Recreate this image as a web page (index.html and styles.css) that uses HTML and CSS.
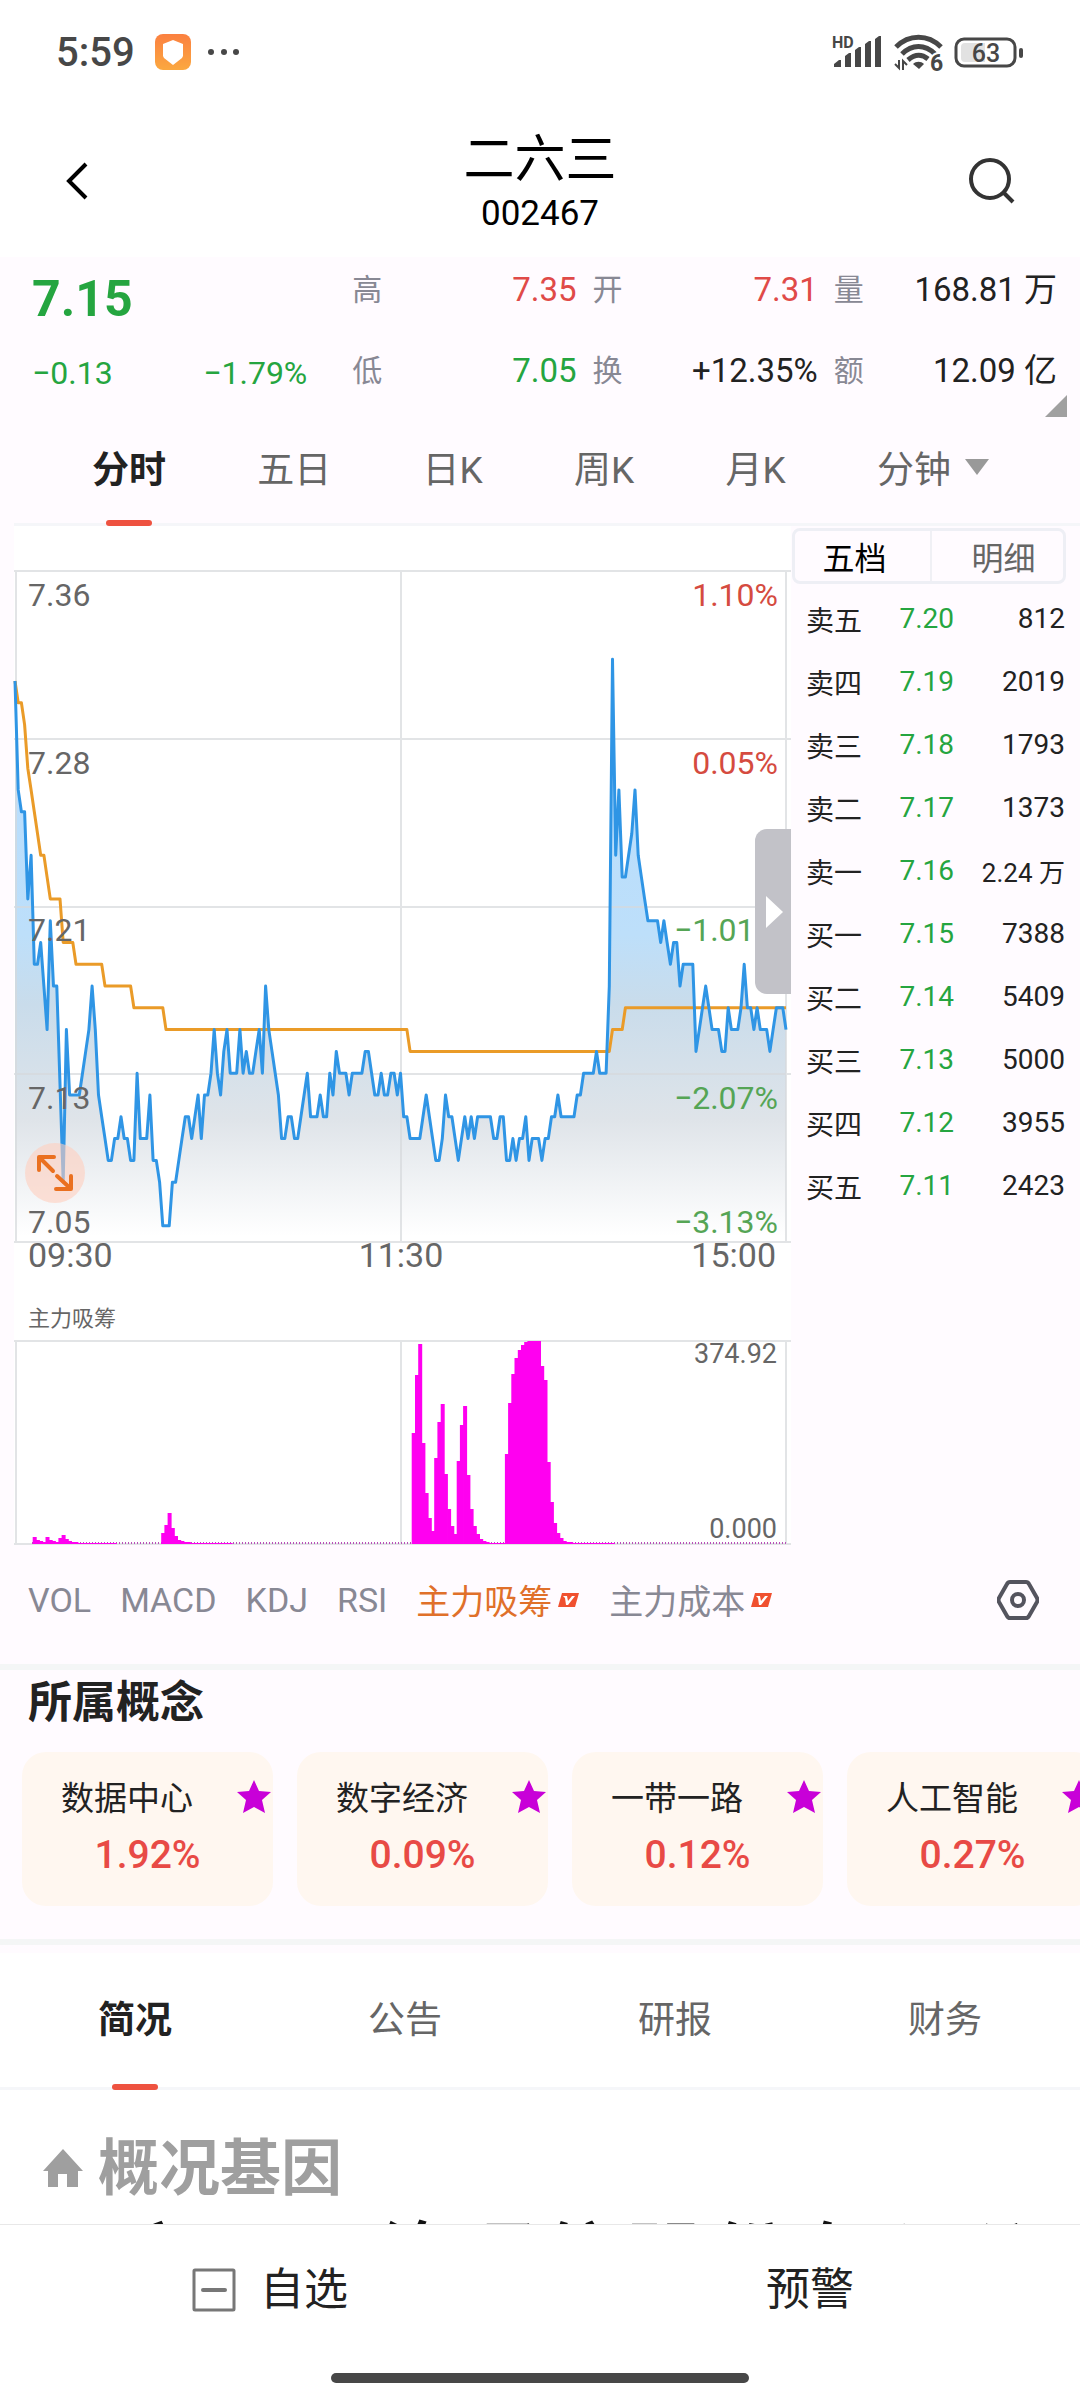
FILE: index.html
```html
<!DOCTYPE html>
<html lang="zh-CN">
<head>
  <meta charset="UTF-8">
  <meta name="viewport" content="width=device-width, initial-scale=1.0">
  <title>二六三 002467</title>
  <link rel="stylesheet" href="styles.css">
</head>
<body>

  <div class="status-bar">
    <span class="clock">5:59</span>
    <svg class="app-icon" width="36" height="36" viewBox="0 0 36 36">
      <defs>
        <linearGradient id="appFill" x1="0" y1="0" x2="0" y2="1">
          <stop offset="0" stop-color="#fb8040"/>
          <stop offset="1" stop-color="#fba840"/>
        </linearGradient>
      </defs>
      <rect width="36" height="36" rx="8" fill="url(#appFill)"/>
      <path d="M18 6L28 10V22L27 24 18 31 9 24 8 22V10z" fill="#fff"/>
    </svg>
    <svg width="34" height="8" viewBox="0 0 34 8" fill="#474747">
      <circle cx="4" cy="4" r="3"/><circle cx="17" cy="4" r="3"/><circle cx="29" cy="4" r="3"/>
    </svg>
    <div class="status-right">
      <svg width="52" height="40" viewBox="0 0 52 40" fill="#474747">
        <text x="0" y="16" class="hd-text">HD</text>
        <path d="M2 35v-3l5-4h2v7zM13 35V24l4-3h2v14zM23 35v-17l4-3h2v20zM33 35V12l4-3h2v26zM43 35V7l4-3h2v31z"/>
      </svg>
      <svg width="50" height="40" viewBox="0 0 50 40">
        <g fill="none" stroke="#474747" stroke-width="5">
          <path d="M2 15C15 2 34 2 47 15"/>
          <path d="M8 22C18 12 31 12 41 22"/>
          <path d="M14 28C21 22 28 22 34 27"/>
        </g>
        <path d="M19 32c3-3 8-3 11 0l-5 5z" fill="#474747"/>
        <path d="M5 28v8l-4-4M9 38v-9l4 4" fill="none" stroke="#474747" stroke-width="2"/>
        <text x="36" y="39" class="wifi-text">6</text>
      </svg>
      <svg width="70" height="40" viewBox="0 0 70 40">
        <rect x="2" y="7" width="59" height="27" rx="8" fill="none" stroke="#474747" stroke-width="3"/>
        <path d="M11 11h20v19H11a4 4 0 0 1-4-4V15a4 4 0 0 1 4-4z" fill="#e2e2e2"/>
        <rect x="65" y="16" width="4" height="10" rx="2" fill="#474747"/>
        <text x="32" y="30" text-anchor="middle" class="battery-text">63</text>
      </svg>
    </div>
  </div>

  <header class="header">
    <button class="icon-btn" aria-label="返回">
      <svg width="24" height="40" viewBox="0 0 24 40"><path d="M22 3L5 20l17 17" fill="none" stroke="#000" stroke-width="4"/></svg>
    </button>
    <div class="header-title">
      <h1>二六三</h1>
      <p>002467</p>
    </div>
    <button class="icon-btn" aria-label="搜索">
      <svg width="48" height="48" viewBox="0 0 48 48" fill="none" stroke="#333" stroke-width="4"><circle cx="22" cy="22" r="19"/><path d="M35 35l10 10"/></svg>
    </button>
  </header>

  <main class="content">
    <section class="quote">
      <div class="quote-main">
        <strong class="green">7.15</strong>
        <div class="quote-change green"><span>−0.13</span><span>−1.79%</span></div>
      </div>
      <dl class="quote-col">
        <dt>高</dt><dd class="red">7.35</dd>
        <dt>低</dt><dd class="green">7.05</dd>
      </dl>
      <dl class="quote-col">
        <dt>开</dt><dd class="red">7.31</dd>
        <dt>换</dt><dd>+12.35%</dd>
      </dl>
      <dl class="quote-col">
        <dt>量</dt><dd>168.81 万</dd>
        <dt>额</dt><dd>12.09 亿</dd>
      </dl>
    </section>
    <div class="corner"></div>

    <nav class="period-tabs">
      <button class="active">分时</button>
      <button>五日</button>
      <button>日K</button>
      <button>周K</button>
      <button>月K</button>
      <button>分钟<i class="arrow-down"></i></button>
    </nav>

    <div class="trade">
      <div class="charts">
        <svg class="price-chart" viewBox="0 0 777 748">
          <defs>
            <linearGradient id="areaFill" gradientUnits="userSpaceOnUse" x1="0" y1="130" x2="0" y2="710">
              <stop offset="0" stop-color="#b4dcff"/>
              <stop offset="0.480" stop-color="#bddffa"/>
              <stop offset="0.600" stop-color="#c9dceb"/>
              <stop offset="0.800" stop-color="#dfe4e9"/>
              <stop offset="1" stop-color="#ffffff"/>
            </linearGradient>
          </defs>
          <path id="priceArea" fill="url(#areaFill)"/>
          <g class="grid-lines">
            <path d="M0 45H777M0 213H777M0 381H777M0 548H777M0 716H777M2 45V716M387 45V716M772 45V716"/>
          </g>
          <polyline id="avgLine" class="avg-line"/>
          <polyline id="priceLine" class="price-line"/>
          <g class="axis-text">
            <text x="14" y="80">7.36</text>
            <text x="14" y="248">7.28</text>
            <text x="14" y="415">7.21</text>
            <text x="14" y="583">7.13</text>
            <text x="14" y="707">7.05</text>
          </g>
          <g class="axis-text time-text">
            <text x="14" y="741">09:30</text>
            <text x="387" y="741" text-anchor="middle">11:30</text>
            <text x="762" y="741" text-anchor="end">15:00</text>
          </g>
          <g class="axis-text" text-anchor="end">
            <text x="764" y="80" class="up">1.10%</text>
            <text x="764" y="248" class="up">0.05%</text>
            <text x="764" y="415" class="down">−1.01%</text>
            <text x="764" y="583" class="down">−2.07%</text>
            <text x="764" y="707" class="down">−3.13%</text>
          </g>
        </svg>
        <svg class="volume-chart" viewBox="0 0 777 271">
          <text x="14" y="52" class="volume-title">主力吸筹</text>
          <path class="grid-lines" d="M0 67H777M2 67V270M387 67V270M772 67V270M0 270H777"/>
          <path d="M18 269H772" class="zero-line"/>
          <g id="volumeBars" class="volume-bars"></g>
          <text x="763" y="89" text-anchor="end" class="volume-text">374.92</text>
          <text x="763" y="264" text-anchor="end" class="volume-text">0.000</text>
        </svg>
        <button class="expand-btn" aria-label="全屏">
          <svg width="40" height="40" viewBox="0 0 40 40" fill="none" stroke="#ea7020" stroke-width="4" stroke-linecap="round" stroke-linejoin="round">
            <path d="M4 17V4h15M5 5l13 13M36 23v13H21M35 35L22 23"/>
          </svg>
        </button>
        <button class="fold-btn" aria-label="收起"><i></i></button>
      </div>

      <aside class="order-book">
        <div class="book-tabs">
          <button class="active">五档</button>
          <button>明细</button>
        </div>
        <table>
          <tbody>
            <tr><th>卖五</th><td>7.20</td><td>812</td></tr>
            <tr><th>卖四</th><td>7.19</td><td>2019</td></tr>
            <tr><th>卖三</th><td>7.18</td><td>1793</td></tr>
            <tr><th>卖二</th><td>7.17</td><td>1373</td></tr>
            <tr><th>卖一</th><td>7.16</td><td class="small">2.24 万</td></tr>
            <tr><th>买一</th><td>7.15</td><td>7388</td></tr>
            <tr><th>买二</th><td>7.14</td><td>5409</td></tr>
            <tr><th>买三</th><td>7.13</td><td>5000</td></tr>
            <tr><th>买四</th><td>7.12</td><td>3955</td></tr>
            <tr><th>买五</th><td>7.11</td><td>2423</td></tr>
          </tbody>
        </table>
      </aside>
    </div>

    <nav class="indicators">
      <button>VOL</button>
      <button>MACD</button>
      <button>KDJ</button>
      <button>RSI</button>
      <button class="active">主力吸筹<svg width="22" height="16" viewBox="0 0 22 16"><path d="M4 1h17l-4 14H0z" fill="#f0502f"/><path d="M5 4h4l1 5 4-5h3l-7 9H8L7 6z" fill="#fff"/></svg></button>
      <button>主力成本<svg width="22" height="16" viewBox="0 0 22 16"><path d="M4 1h17l-4 14H0z" fill="#f0502f"/><path d="M5 4h4l1 5 4-5h3l-7 9H8L7 6z" fill="#fff"/></svg></button>
      <button class="settings" aria-label="设置">
        <svg width="42" height="40" viewBox="0 0 42 40" fill="none" stroke="#54545e" stroke-width="4" stroke-linejoin="round">
          <path d="M13 2h16q2 0 3 2l8 14q1 2 0 4l-8 14q-1 2-3 2H13q-2 0-3-2L2 22q-1-2 0-4l8-14q1-2 3-2z"/>
          <circle cx="21" cy="20" r="6"/>
        </svg>
      </button>
    </nav>

    <section class="concepts">
      <h2>所属概念</h2>
      <div class="concept-list">
        <a class="concept" href="#"><span>数据中心</span><b>1.92%</b><svg class="star" viewBox="0 0 34 34"><path d="M17 0l5 11 12 1-9 8 3 13-11-6-11 6 3-13-9-8 12-1z"/></svg></a>
        <a class="concept" href="#"><span>数字经济</span><b>0.09%</b><svg class="star" viewBox="0 0 34 34"><path d="M17 0l5 11 12 1-9 8 3 13-11-6-11 6 3-13-9-8 12-1z"/></svg></a>
        <a class="concept" href="#"><span>一带一路</span><b>0.12%</b><svg class="star" viewBox="0 0 34 34"><path d="M17 0l5 11 12 1-9 8 3 13-11-6-11 6 3-13-9-8 12-1z"/></svg></a>
        <a class="concept" href="#"><span>人工智能</span><b>0.27%</b><svg class="star" viewBox="0 0 34 34"><path d="M17 0l5 11 12 1-9 8 3 13-11-6-11 6 3-13-9-8 12-1z"/></svg></a>
      </div>
    </section>

    <section class="company">
      <nav class="info-tabs">
        <button class="active">简况</button>
        <button>公告</button>
        <button>研报</button>
        <button>财务</button>
      </nav>
      <h3>
        <svg width="42" height="40" viewBox="0 0 42 40"><path d="M21 0l20 22h-5v16H25V25H16v13H6V22H1z" fill="#9f9f9f"/></svg>
        概况基因
      </h3>
      <p class="company-name">二六三网络通信股份有限公司</p>
    </section>
  </main>

  <footer class="bottom-bar">
    <div class="actions">
      <button>
        <svg width="44" height="44" viewBox="0 0 44 44" fill="none" stroke="#777" stroke-width="3"><rect x="2" y="2" width="40" height="40" rx="1"/><path d="M11 22h22" stroke-width="4" stroke-linecap="round"/></svg>
        自选
      </button>
      <button>预警</button>
    </div>
    <div class="home-indicator"></div>
  </footer>

  <script>
    // One value per minute: cents below the 7.31 open
    const prices = [
      0, 5, 6, 6, 10, 8, 13, 13, 12, 14, 16, 11, 14, 14, 18.5, 23, 16, 19, 19, 19,
      19, 18, 17, 16, 14, 16, 19, 20, 21, 22, 22, 21, 21, 20, 21, 21, 22, 22, 18, 21,
      21, 21, 19, 22, 22, 23, 25, 25, 25, 23, 23, 22, 21, 20, 20, 21, 20, 19, 21, 19,
      19, 18, 16, 18, 19, 17, 16, 18, 18, 18, 16, 18, 17, 18, 18, 17, 16, 18, 14, 16,
      17, 18, 19, 21, 21, 20, 20, 21, 21, 20, 19, 18, 20, 20, 20, 19, 20, 20, 18, 19,
      17, 18, 18, 18, 19, 18, 18, 18, 18, 17, 17, 18, 19, 19, 18, 19, 19, 18, 18, 19,
      18, 20, 20, 21, 21, 21, 21, 20, 19, 20, 21, 22, 22, 21, 19, 20, 20, 21, 22, 21,
      20, 21, 20, 21, 20, 20, 20, 20, 20, 21, 21, 20, 20, 22, 22, 21, 22, 21, 21, 20,
      22, 21, 21, 21, 22, 21, 21, 20, 20, 19, 20, 20, 20, 20, 20, 19, 19, 18, 18, 18,
      18, 17, 18, 18, 18, 14, -1, 8, 5, 9, 9, 8, 7, 5, 8, 9, 10, 11, 11, 11,
      11, 12, 11, 12, 13, 12, 12, 14, 13, 13, 13, 13, 17, 16, 15, 14, 15, 16, 16, 16,
      17, 17, 15, 16, 16, 16, 15, 13, 15, 15, 16, 15, 16, 16, 16, 17, 16, 15, 15, 15, 16
    ];

    // Average price, [minute, cents below open] at each turn
    const average = [
      [0, 0], [1, 1], [2, 1], [3, 2], [4, 4], [5, 5], [6, 6], [7, 7], [8, 8], [9, 8], [10, 9], [11, 10],
      [14, 10], [15, 12], [18, 12], [19, 13], [27, 13], [28, 14], [36, 14], [37, 15], [46, 15], [47, 16],
      [122, 16], [123, 17], [185, 17], [186, 16], [189, 16], [190, 15], [240, 15]
    ];

    // Bars: start minute and the heights that follow it
    const volumes = [
      [6, [7, 4, 3, 2, 7, 4, 3, 2, 6, 9, 5, 3, 2, 2, 1, 1, 1, 1, 1, 1, 1, 1, 1, 1, 1, 1]],
      [46, [11, 19, 31, 16, 8, 4, 3, 2, 2, 1, 1, 1, 1, 1, 1, 1, 1, 1, 1, 1, 1, 1]],
      [124, [111, 169, 200, 101, 51, 26, 13, 86, 122, 140, 70, 35, 18, 10, 83, 119, 138, 69, 35, 18, 10, 5, 3, 2, 1, 1, 1, 1, 1]],
      [153, [90, 141, 170, 186, 194, 199, 202, 203, 203, 203, 203, 178, 164, 82, 42, 21, 11, 6, 3, 2, 2, 1, 1, 1, 1, 1, 1, 1, 1, 1, 1, 1, 1, 1]]
    ];

    const x = minute => (1 + minute * 3.2125).toFixed(1);
    const y = cents => (155 + cents * 21.79).toFixed(1);

    const line = prices.map((c, m) => x(m) + ',' + y(c)).join(' ');
    document.getElementById('priceLine').setAttribute('points', line);
    document.getElementById('priceArea').setAttribute('d', 'M' + x(0) + ',716 L' + line + ' L' + x(240) + ',716 Z');
    document.getElementById('avgLine').setAttribute('points', average.map(p => x(p[0]) + ',' + y(p[1])).join(' '));

    const bars = document.getElementById('volumeBars');
    volumes.forEach(([start, heights]) => {
      heights.forEach((h, i) => {
        const bar = document.createElementNS('http://www.w3.org/2000/svg', 'rect');
        bar.setAttribute('x', x(start + i - 0.5));
        bar.setAttribute('y', 270 - h);
        bar.setAttribute('width', 4);
        bar.setAttribute('height', h);
        bars.appendChild(bar);
      });
    });
  </script>

</body>
</html>
```

FILE: styles.css
```css
* {
  box-sizing: border-box;
  margin: 0;
  padding: 0;
}
body {
  display: flex;
  flex-direction: column;
  height: 100vh;
  overflow: hidden;
  background-color: #fff;
  color: #222;
  font-family: Roboto, "Noto Sans CJK SC", sans-serif;
}
button {
  border: none;
  background: none;
  color: inherit;
  font: inherit;
  cursor: pointer;
}
svg {
  display: block;
  flex: none;
}
.red {
  color: #e04a48;
}
.green {
  color: #25a540;
}

/* status bar */
.status-bar {
  display: flex;
  align-items: center;
  height: 104px;
  padding: 0 56px;
  color: #474747;
}
.clock {
  font-size: 40px;
  font-weight: 500;
}
.app-icon {
  margin: 0 16px 0 20px;
}
.status-right {
  display: flex;
  gap: 10px;
  margin-left: auto;
}
.hd-text {
  font-size: 16px;
  font-weight: 700;
}
.wifi-text {
  fill: #474747;
  stroke: #fff;
  stroke-width: 4px;
  paint-order: stroke;
  font-size: 23px;
  font-weight: 700;
}
.battery-text {
  fill: #474747;
  font-size: 25px;
  font-weight: 500;
}

/* header */
.header {
  display: flex;
  align-items: center;
  justify-content: space-between;
  height: 153px;
  padding: 0 64px;
}
.icon-btn {
  display: flex;
  width: 48px;
}
.header-title {
  padding-top: 8px;
  text-align: center;
  color: #000;
}
.header-title h1 {
  font-size: 51px;
  font-weight: 400;
  line-height: 58px;
}
.header-title p {
  font-size: 35px;
  line-height: 50px;
}

.content {
  flex: 1;
  min-height: 0;
  overflow: hidden;
  background-color: #fffbff;
}

/* quote */
.quote {
  display: grid;
  grid-template-columns: 304fr 224fr 225fr 223fr;
  column-gap: 16px;
  height: 138px;
  padding: 0 23px 0 32px;
  font-size: 33px;
}
.quote-main {
  padding-right: 29px;
}
.quote-main strong {
  display: block;
  font-size: 50px;
  font-weight: 700;
  line-height: 84px;
}
.quote-change {
  display: flex;
  justify-content: space-between;
  font-size: 32px;
  line-height: 64px;
}
.quote-col {
  display: grid;
  grid-template-columns: auto 1fr;
  grid-auto-rows: 81px;
  line-height: 66px;
}
.quote-col dt {
  color: #888894;
  font-size: 30px;
}
.quote-col dd {
  text-align: right;
}
.corner {
  width: 22px;
  height: 22px;
  margin-left: auto;
  margin-right: 13px;
  background-color: #a0a0a0;
  clip-path: polygon(100% 0, 100% 100%, 0 100%);
}

/* period tabs */
.period-tabs {
  display: flex;
  justify-content: space-between;
  height: 109px;
  margin-left: 14px;
  padding: 0 91px 0 78px;
  border-bottom: 3px solid #f5f6f9;
  color: #666;
  font-size: 37px;
}
.period-tabs button {
  position: relative;
  display: flex;
  align-items: center;
  gap: 14px;
  padding-bottom: 6px;
}
.period-tabs .active,
.info-tabs .active {
  color: #222;
  font-weight: 700;
}
.period-tabs .active::after,
.info-tabs .active::after {
  content: "";
  position: absolute;
  bottom: -3px;
  left: 50%;
  width: 46px;
  height: 6px;
  margin-left: -23px;
  border-radius: 3px;
  background-color: #ee5240;
}
.arrow-down {
  border: 12px solid transparent;
  border-top: 16px solid #999;
  border-bottom: none;
}

/* charts */
.trade {
  display: grid;
  grid-template-columns: 777fr 289fr;
  margin-left: 14px;
}
.charts {
  position: relative;
  background-color: #fff;
}
.price-chart,
.volume-chart {
  width: 100%;
  overflow: visible;
}
.grid-lines {
  fill: none;
  stroke: #d5d9dc;
  stroke-opacity: 0.7;
  stroke-width: 2;
}
.price-line,
.avg-line {
  fill: none;
  stroke: #2f95e5;
  stroke-width: 3;
  stroke-linejoin: round;
}
.avg-line {
  stroke: #ea9b28;
}
.axis-text {
  fill: #666;
  font-size: 32px;
}
.time-text {
  font-size: 34px;
}
.axis-text .up {
  fill: #d54b40;
}
.axis-text .down {
  fill: #55a555;
}
.volume-title {
  fill: #666;
  font-size: 22px;
}
.volume-text {
  fill: #666;
  font-size: 27px;
}
.zero-line {
  stroke: #b84fb8;
  stroke-width: 2;
  stroke-dasharray: 1 2;
}
.volume-bars {
  fill: #ff00f0;
}
.expand-btn {
  position: absolute;
  top: 617px;
  left: 11px;
  display: flex;
  align-items: center;
  justify-content: center;
  width: 60px;
  height: 60px;
  border-radius: 50%;
  background-color: rgba(255, 206, 190, 0.6);
}
.fold-btn {
  position: absolute;
  top: 303px;
  right: 0;
  display: flex;
  align-items: center;
  width: 36px;
  height: 165px;
  padding-left: 11px;
  border-radius: 12px 0 0 12px;
  background-color: #c2c2c8;
}
.fold-btn i {
  border: 16px solid transparent;
  border-left: 17px solid #fff;
  border-right: none;
}

/* order book */
.order-book {
  padding: 2px 14px 0 1px;
}
.book-tabs {
  display: flex;
  height: 56px;
  border: 3px solid #eeeff5;
  border-radius: 8px;
  color: #666;
  font-size: 32px;
}
.book-tabs button {
  flex: 1;
}
.book-tabs button + button {
  padding-left: 12px;
  border-left: 2px solid #f0f0f5;
}
.book-tabs .active {
  padding-right: 16px;
  color: #000;
}
.order-book table {
  width: 100%;
  margin-top: 3px;
  border-collapse: collapse;
  font-size: 28px;
}
.order-book tr {
  height: 63px;
}
.order-book th {
  padding-left: 14px;
  font-weight: 400;
  text-align: left;
}
.order-book td {
  color: #25a540;
  text-align: right;
}
.order-book td:last-child {
  width: 112px;
  padding-right: 1px;
  color: #222;
}
.order-book .small {
  font-size: 26px;
}

/* indicator tabs */
.indicators {
  display: flex;
  align-items: center;
  gap: 29px;
  height: 119px;
  padding: 0 41px 10px 28px;
  color: #888894;
  font-size: 34px;
}
.indicators button {
  display: flex;
  align-items: center;
  gap: 6px;
}
.indicators .active {
  color: #e0702a;
}
.indicators .settings {
  margin-left: auto;
}

/* concepts */
.concepts {
  height: 281px;
  border-top: 6px solid #f4f6f6;
  border-bottom: 6px solid #f4f6f6;
}
.concepts h2 {
  padding-left: 28px;
  font-size: 44px;
  font-weight: 700;
  line-height: 66px;
}
.concept-list {
  display: flex;
  gap: 24px;
  margin-top: 16px;
  padding-left: 22px;
  overflow: hidden;
}
.concept {
  position: relative;
  flex: none;
  width: 251px;
  height: 154px;
  padding-top: 19px;
  border-radius: 24px;
  background-color: #fff7f0;
  color: #222;
  text-decoration: none;
}
.concept span,
.concept b {
  display: block;
  line-height: 56px;
}
.concept span {
  padding-left: 39px;
  font-size: 33px;
}
.concept b {
  color: #e84a45;
  font-size: 39px;
  font-weight: 500;
  text-align: center;
}
.star {
  position: absolute;
  top: 28px;
  right: 2px;
  width: 34px;
  height: 34px;
  fill: #c800d8;
}

/* company info */
.company {
  margin-top: 8px;
  background-color: #fff;
}
.info-tabs {
  display: flex;
  height: 137px;
  border-bottom: 3px solid #f5f6f9;
  color: #666;
  font-size: 37px;
}
.info-tabs button {
  position: relative;
  flex: 1;
  padding-bottom: 6px;
}
.company h3 {
  display: flex;
  align-items: center;
  gap: 14px;
  height: 126px;
  padding: 32px 0 0 42px;
  color: #9f9f9f;
  font-size: 61px;
  font-weight: 700;
  line-height: 80px;
}
.company-name {
  padding: 0 36px;
  color: #111;
  font-size: 84px;
  font-weight: 500;
  line-height: 96px;
}

/* bottom bar */
.bottom-bar {
  height: 176px;
  border-top: 1px solid #e8e8e8;
  background-color: #fff;
}
.actions {
  display: flex;
  height: 130px;
  font-size: 44px;
  line-height: 60px;
}
.actions button {
  display: flex;
  flex: 1;
  align-items: center;
  justify-content: center;
  gap: 24px;
}
.home-indicator {
  width: 418px;
  height: 10px;
  margin: 18px auto 0;
  border-radius: 5px;
  background-color: #474747;
}
```
